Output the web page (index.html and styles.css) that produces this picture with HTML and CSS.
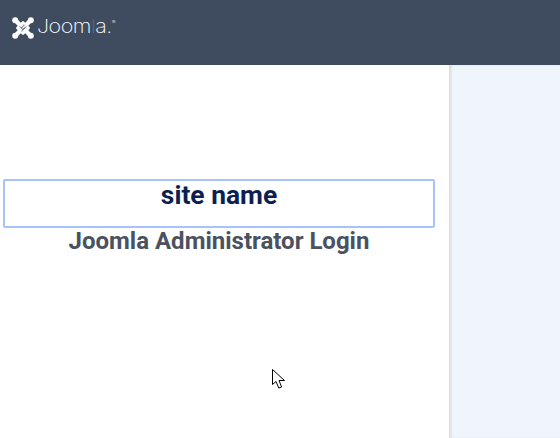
FILE: index.html
```html
<!DOCTYPE html>
<html lang="en">
<head>
<meta charset="utf-8">
<title>Joomla Administrator Login</title>
<link rel="stylesheet" href="styles.css">
</head>
<body>
<header class="topbar">
  <div class="brand">
    <svg class="brand-mark" width="22" height="22" viewBox="0 0 22 22" aria-hidden="true">
      <g fill="none" stroke="#fff" stroke-linecap="round">
        <path d="M4 4 L18 18" stroke-width="4.4"/>
        <path d="M18 4 L4 18" stroke-width="4.4"/>
        <path d="M11 5.4 L16.6 11 L11 16.6 L5.4 11 Z" stroke-width="2.6" stroke-linejoin="round"/>
      </g>
      <g fill="#fff">
        <circle cx="3.2" cy="3.2" r="3"/>
        <circle cx="18.8" cy="3.2" r="3"/>
        <circle cx="3.2" cy="18.8" r="3"/>
        <circle cx="18.8" cy="18.8" r="3"/>
      </g>
      <path d="M7.8 9.4 L11 12.6 M14.2 9.4 L11 12.6 M9.4 14.2 L12.6 11 M12.6 7.8 L9.4 11" fill="none" stroke="#3f4c5f" stroke-width="0.9"/>
    </svg>
    <span class="brand-name">Joom<span class="brand-dim">l</span>a.<sup class="brand-reg">®</sup></span>
  </div>
</header>
<div class="layout">
  <main class="login">
    <h1 class="site-name">site name</h1>
    <h2 class="login-title">Joomla Administrator Login</h2>
  </main>
  <aside class="side"></aside>
</div>
<svg class="cursor" width="15" height="21" viewBox="0 0 15 21" aria-hidden="true">
  <path d="M0.5 0.5 L0.5 15.5 L4 12.5 L6.8 19 L9.6 18 L7 11.5 L12.5 11.5 Z" fill="#fff" stroke="#000" stroke-width="1"/>
</svg>
</body>
</html>
```
FILE: styles.css
```css
* { box-sizing: border-box; }
html, body { height: 100%; }
body {
  margin: 0;
  display: flex;
  flex-direction: column;
  background: #fff;
  font-family: Roboto, "Liberation Sans", sans-serif;
  overflow: hidden;
}
.topbar {
  height: 65px;
  flex: none;
  display: flex;
  align-items: center;
  padding: 0 0 10px 12px;
  background: #3f4c5f;
}
.brand { display: flex; align-items: center; color: #fff; }
.brand-mark { display: block; flex: none; }
.brand-name {
  display: inline-block;
  position: relative;
  top: -1px;
  margin-left: 3px;
  font-family: Inter, sans-serif;
  font-weight: 200;
  font-size: 19px;
  letter-spacing: -0.45px;
  white-space: nowrap;
  transform: scaleX(1.13);
  transform-origin: left center;
}
.brand-dim { color: #56708c; }
.brand-reg {
  font-size: 5px;
  line-height: 0;
  vertical-align: 9px;
  margin-left: 0;
}
.layout { flex: 1; display: flex; min-height: 0; }
.login {
  width: 449px;
  flex: none;
  padding: 114px 14px 0 3px;
  background: #fff;
}
.site-name {
  margin: 0;
  height: 49px;
  border: 2px solid #a8c2fb;
  border-radius: 2px;
  text-align: center;
  font-size: 26.4px;
  line-height: 28px;
  font-weight: 700;
  color: #0d1f52;
}
.login-title {
  margin: 0;
  text-align: center;
  font-size: 24px;
  line-height: 26px;
  font-weight: 700;
  color: #4a5260;
}
.side {
  flex: 1;
  background: #f0f4fb;
  box-shadow: inset 3px 0 3px -1px #d5d9e2;
}
.cursor { position: absolute; left: 272px; top: 369px; }
```
